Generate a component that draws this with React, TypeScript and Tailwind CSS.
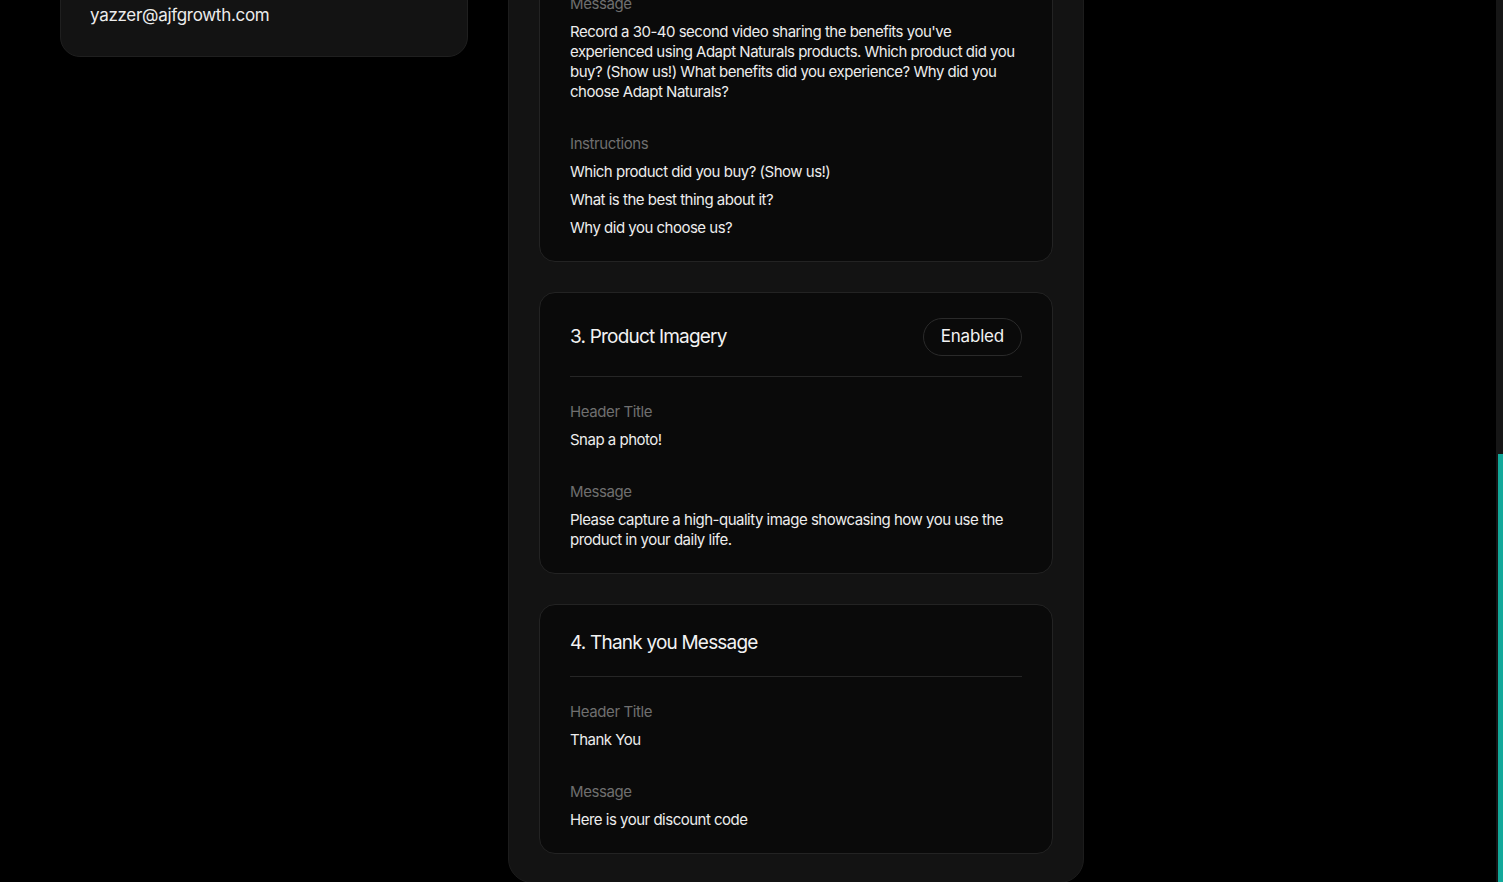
import React from "react";

const font = { fontFamily: "Inter, 'Noto Sans', sans-serif" };

function Label({ children }: { children: React.ReactNode }) {
  return <div className="text-[15px] leading-5 text-[#6f6f6f] tracking-[-0.4px]">{children}</div>;
}

function Value({ children }: { children: React.ReactNode }) {
  return <div className="text-[15px] leading-5 text-[#ededed] tracking-[-0.5px]">{children}</div>;
}

function Field({ label, children }: { label: string; children: React.ReactNode }) {
  return (
    <div className="flex flex-col gap-2">
      <Label>{label}</Label>
      {children}
    </div>
  );
}

function Card({ title, enabled, children }: { title: string; enabled?: boolean; children: React.ReactNode }) {
  return (
    <div className="rounded-2xl border border-[#232323] bg-[#0a0a0a] px-[30px] pb-[23px]">
      <div className="flex items-center justify-between border-b border-[#262626] pt-[25px] pb-5">
        <div className="text-[19px] leading-[26px] text-[#f2f2f2] tracking-[-0.8px]">{title}</div>
        {enabled && (
          <div className="flex h-[38px] items-center rounded-full border border-[#2a2a2a] px-[17px] text-[17px] text-[#f2f2f2] tracking-[-0.2px]">
            Enabled
          </div>
        )}
      </div>
      <div className="flex flex-col gap-8 pt-[25px]">{children}</div>
    </div>
  );
}

export default function App() {
  return (
    <div className="flex h-[882px] w-full overflow-hidden bg-black" style={font}>
      <div className="flex flex-1 items-start gap-[40px] pl-[60px]">
        <div className="mt-[-56px] w-[408px] rounded-[20px] border border-[#1f1f1f] bg-[#131313] px-[29px] pt-[30px] pb-[29px]">
          <div className="text-[15px] leading-5 text-[#6f6f6f]">Email</div>
          <div className="mt-2 text-[17px] leading-6 text-[#ececec] tracking-[-0.3px]">yazzer@ajfgrowth.com</div>
        </div>

        <div className="mt-[-227px] flex w-[576px] flex-col gap-[30px] rounded-[24px] border border-[#1c1c1c] bg-[#131313] px-[30px] pt-[30px] pb-7">
          <Card title="2. Video Testimonial" enabled>
            <Field label="Header Title">
              <Value>Share your experience!</Value>
            </Field>
            <Field label="Message">
              <Value>
                Record a 30-40 second video sharing the benefits you've
                <br />
                experienced using Adapt Naturals products. Which product did you
                <br />
                buy? (Show us!) What benefits did you experience? Why did you
                <br />
                choose Adapt Naturals?
              </Value>
            </Field>
            <Field label="Instructions">
              <Value>Which product did you buy? (Show us!)</Value>
              <Value>What is the best thing about it?</Value>
              <Value>Why did you choose us?</Value>
            </Field>
          </Card>

          <Card title="3. Product Imagery" enabled>
            <Field label="Header Title">
              <Value>Snap a photo!</Value>
            </Field>
            <Field label="Message">
              <Value>
                Please capture a high-quality image showcasing how you use the
                <br />
                product in your daily life.
              </Value>
            </Field>
          </Card>

          <Card title="4. Thank you Message">
            <Field label="Header Title">
              <Value>Thank You</Value>
            </Field>
            <Field label="Message">
              <Value>Here is your discount code</Value>
            </Field>
          </Card>
        </div>
      </div>

      <div className="flex h-full w-[7px] flex-col bg-[#161616] pl-[2px]">
        <div className="mt-[454px] flex-1 bg-[#13a89a]" />
      </div>
    </div>
  );
}
